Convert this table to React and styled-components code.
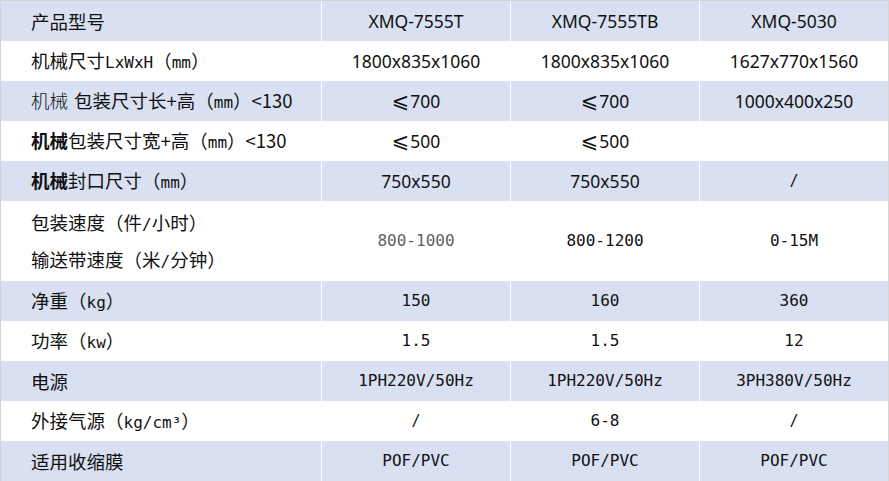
import React from 'react';
import styled, { createGlobalStyle } from 'styled-components';

const GlobalStyle = createGlobalStyle`
  html, body {
    margin: 0;
    padding: 0;
    background: #ffffff;
  }
`;

const Table = styled.div`
  width: 889px;
  box-sizing: border-box;
  border-top: 1px solid #d4d4d4;
  border-left: 1px solid #d4d4d4;
  border-right: 1px solid #d4d4d4;
  background: #ffffff;
  color: #111;
`;

const Row = styled.div`
  display: grid;
  grid-template-columns: 320px 188px 188px 188px;
  column-gap: 1px;
  height: ${(props) => (props.$tall ? '80px' : '40px')};
  background: #ffffff;
`;

const Cell = styled.div`
  display: flex;
  flex-direction: column;
  justify-content: center;
  align-items: ${(props) => (props.$label ? 'flex-start' : 'center')};
  padding-left: ${(props) => (props.$label ? '30px' : '0')};
  gap: 14px;
  background: ${(props) => (props.$shade ? '#d9e0f2' : '#ffffff')};
  font-family: ${(props) =>
    props.$mono
      ? '"DejaVu Sans Mono", "Noto Sans CJK SC", monospace'
      : '"Noto Sans", "Noto Sans CJK SC", sans-serif'};
  font-size: ${(props) => (props.$mono ? '16px' : '17.5px')};
  white-space: nowrap;
  line-height: 1.2;
`;

const Hei = styled.span`
  font-family: "Noto Sans CJK SC", "DejaVu Sans Mono", sans-serif;
  font-size: 18.5px;
  font-weight: ${(props) => (props.$bold ? 700 : 400)};
`;

const Latin = styled.span`
  font-family: "DejaVu Sans Mono", monospace;
  font-size: 16px;
`;

const Thin = styled.span`
  font-family: "Noto Sans CJK SC", sans-serif;
  font-size: 18.5px;
  font-weight: 300;
  margin-right: 6px;
`;

const Slash = styled.span`
  font-family: "DejaVu Sans Mono", monospace;
  font-size: 15px;
  font-weight: 300;
`;

const Le = styled.span`
  font-family: "DejaVu Sans", sans-serif;
  font-size: 21px;
  line-height: 1;
  margin-right: 1px;
`;

const Faded = styled.span`
  color: #444;
  opacity: 0.85;
`;

export default function App() {
  return (
    <>
      <GlobalStyle />
      <Table>
        <Row>
          <Cell $label $shade><Hei>产品型号</Hei></Cell>
          <Cell $shade>XMQ-7555T</Cell>
          <Cell $shade>XMQ-7555TB</Cell>
          <Cell $shade>XMQ-5030</Cell>
        </Row>
        <Row>
          <Cell $label>
            <span>
              <Hei>机械尺寸</Hei>
              <Latin>LxWxH</Latin>
              <Hei>（</Hei>
              <Latin>mm</Latin>
              <Hei>）</Hei>
            </span>
          </Cell>
          <Cell>1800x835x1060</Cell>
          <Cell>1800x835x1060</Cell>
          <Cell>1627x770x1560</Cell>
        </Row>
        <Row>
          <Cell $label $shade>
            <span>
              <Thin>机械</Thin>
              <Hei>包装尺寸长+高（</Hei>
              <Latin>mm</Latin>
              <Hei>）&lt;130</Hei>
            </span>
          </Cell>
          <Cell $shade><span><Le>⩽</Le>700</span></Cell>
          <Cell $shade><span><Le>⩽</Le>700</span></Cell>
          <Cell $shade>1000x400x250</Cell>
        </Row>
        <Row>
          <Cell $label>
            <span>
              <Hei $bold>机械</Hei>
              <Hei>包装尺寸宽+高（</Hei>
              <Latin>mm</Latin>
              <Hei>）&lt;130</Hei>
            </span>
          </Cell>
          <Cell><span><Le>⩽</Le>500</span></Cell>
          <Cell><span><Le>⩽</Le>500</span></Cell>
          <Cell></Cell>
        </Row>
        <Row>
          <Cell $label $shade>
            <span>
              <Hei $bold>机械</Hei>
              <Hei>封口尺寸（</Hei>
              <Latin>mm</Latin>
              <Hei>）</Hei>
            </span>
          </Cell>
          <Cell $shade>750x550</Cell>
          <Cell $shade>750x550</Cell>
          <Cell $shade><Slash>/</Slash></Cell>
        </Row>
        <Row $tall>
          <Cell $label>
            <span><Hei>包装速度（件</Hei><Latin>/</Latin><Hei>小时）</Hei></span>
            <span><Hei>输送带速度（米</Hei><Latin>/</Latin><Hei>分钟）</Hei></span>
          </Cell>
          <Cell $mono><Faded>800-1000</Faded></Cell>
          <Cell $mono>800-1200</Cell>
          <Cell $mono>0-15M</Cell>
        </Row>
        <Row>
          <Cell $label $shade><span><Hei>净重（</Hei><Latin>kg</Latin><Hei>）</Hei></span></Cell>
          <Cell $mono $shade>150</Cell>
          <Cell $mono $shade>160</Cell>
          <Cell $mono $shade>360</Cell>
        </Row>
        <Row>
          <Cell $label><span><Hei>功率（</Hei><Latin>kw</Latin><Hei>）</Hei></span></Cell>
          <Cell $mono>1.5</Cell>
          <Cell $mono>1.5</Cell>
          <Cell $mono>12</Cell>
        </Row>
        <Row>
          <Cell $label $shade><Hei>电源</Hei></Cell>
          <Cell $mono $shade>1PH220V/50Hz</Cell>
          <Cell $mono $shade>1PH220V/50Hz</Cell>
          <Cell $mono $shade>3PH380V/50Hz</Cell>
        </Row>
        <Row>
          <Cell $label><span><Hei>外接气源（</Hei><Latin>kg/cm³</Latin><Hei>）</Hei></span></Cell>
          <Cell $mono><Slash>/</Slash></Cell>
          <Cell $mono>6-8</Cell>
          <Cell $mono><Slash>/</Slash></Cell>
        </Row>
        <Row>
          <Cell $label $shade><Hei>适用收缩膜</Hei></Cell>
          <Cell $mono $shade>POF/PVC</Cell>
          <Cell $mono $shade>POF/PVC</Cell>
          <Cell $mono $shade>POF/PVC</Cell>
        </Row>
      </Table>
    </>
  );
}
